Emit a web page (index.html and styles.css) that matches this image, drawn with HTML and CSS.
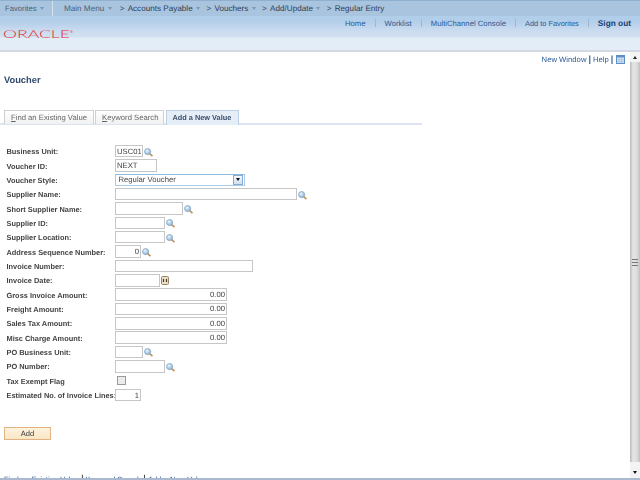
FILE: index.html
```html
<!DOCTYPE html>
<html lang="en">
<head>
<meta charset="utf-8">
<title>Voucher</title>
<link rel="stylesheet" href="styles.css">
</head>
<body>
<svg class="defs" width="0" height="0" aria-hidden="true">
  <defs>
    <radialGradient id="lens" cx="40%" cy="35%" r="70%">
      <stop offset="0" stop-color="#eef6fc"/>
      <stop offset="1" stop-color="#7fabd3"/>
    </radialGradient>
    <symbol id="mag" viewBox="0 0 10 10">
      <line x1="6" y1="6" x2="9.4" y2="9" stroke="#c0905a" stroke-width="1.8"/>
      <circle cx="4" cy="4" r="3.4" fill="url(#lens)" stroke="#85a8c6" stroke-width="0.9"/>
    </symbol>
  </defs>
</svg>
<header class="top">
  <nav class="crumbs">
    <span class="fav">Favorites<i class="caret"></i></span>
    <span class="menu">
      <span class="c1">Main Menu<i class="caret"></i></span>
      <span class="gt">&gt;</span><span class="c2">Accounts Payable<i class="caret"></i></span>
      <span class="gt">&gt;</span><span class="c2">Vouchers<i class="caret"></i></span>
      <span class="gt">&gt;</span><span class="c2">Add/Update<i class="caret"></i></span>
      <span class="gt">&gt;</span><span>Regular Entry</span>
    </span>
  </nav>
  <div class="links">
    <a>Home</a><b class="sep"></b><a>Worklist</a><b class="sep"></b><a>MultiChannel Console</a><b class="sep"></b><a class="fav-link">Add to Favorites</a><b class="sep"></b><a class="out">Sign out</a>
  </div>
  <div class="logo">
    <svg width="74" height="12" viewBox="0 0 74 12"><text x="0" y="8.6" textLength="67" lengthAdjust="spacingAndGlyphs" class="oracle">ORACLE</text><text x="67" y="3.5" class="reg">®</text></svg>
  </div>
</header>
<div class="main">
  <div class="content">
    <div class="tools">
      <a>New Window</a><span class="bar">|</span><a>Help</a><span class="bar">|</span>
      <svg class="grid-ico" width="9" height="9" viewBox="0 0 9 9"><rect x="0.5" y="0.5" width="8" height="8" fill="#dbe7f4" stroke="#5d8fc4"/><rect x="0" y="0" width="9" height="2.5" fill="#5d8fc4"/><path d="M1 4.7h7M1 6.7h7M3.2 3v5M5.8 3v5" stroke="#9dbbdb" stroke-width="0.7"/></svg>
    </div>
    <h1 class="title">Voucher</h1>
    <div class="tabs">
      <div class="tab"><u>F</u>ind an Existing Value</div>
      <div class="tab"><u>K</u>eyword Search</div>
      <div class="tab active">Add a New Value</div>
    </div>
    <form class="form">
      <label>Business Unit:</label><div class="f"><input class="w28" value="USC01"><svg class="mag"><use href="#mag"/></svg></div>
      <label>Voucher ID:</label><div class="f"><input class="w42" value="NEXT"></div>
      <label>Voucher Style:</label><div class="f"><div class="select"><span>Regular Voucher</span><i class="drop"><i class="tri"></i></i></div></div>
      <label>Supplier Name:</label><div class="f"><input class="w182"><svg class="mag"><use href="#mag"/></svg></div>
      <label>Short Supplier Name:</label><div class="f"><input class="w68"><svg class="mag"><use href="#mag"/></svg></div>
      <label>Supplier ID:</label><div class="f"><input class="w50"><svg class="mag"><use href="#mag"/></svg></div>
      <label>Supplier Location:</label><div class="f"><input class="w50"><svg class="mag"><use href="#mag"/></svg></div>
      <label>Address Sequence Number:</label><div class="f"><input class="w26 num" value="0"><svg class="mag"><use href="#mag"/></svg></div>
      <label>Invoice Number:</label><div class="f"><input class="w138"></div>
      <label>Invoice Date:</label><div class="f"><input class="w45"><svg class="cal" width="8" height="9" viewBox="0 0 8 9"><rect x="0.5" y="0.5" width="7" height="8" rx="1" fill="#eadcc0" stroke="#97866a"/><path d="M2.5 3v3M5.5 3v3" stroke="#3d3424" stroke-width="1.1"/></svg></div>
      <label>Gross Invoice Amount:</label><div class="f"><input class="w112 num" value="0.00"></div>
      <label>Freight Amount:</label><div class="f"><input class="w112 num" value="0.00"></div>
      <label>Sales Tax Amount:</label><div class="f"><input class="w112 num" value="0.00"></div>
      <label>Misc Charge Amount:</label><div class="f"><input class="w112 num" value="0.00"></div>
      <label>PO Business Unit:</label><div class="f"><input class="w28"><svg class="mag"><use href="#mag"/></svg></div>
      <label>PO Number:</label><div class="f"><input class="w50"><svg class="mag"><use href="#mag"/></svg></div>
      <label>Tax Exempt Flag</label><div class="f"><i class="check"></i></div>
      <label>Estimated No. of Invoice Lines:</label><div class="f"><input class="w26 num" value="1"></div>
    </form>
    <div class="action"><button class="add" type="button">Add</button></div>
    <div class="foot"><a>Find an Existing Value</a><span class="fbar">|</span><a>Keyword Search</a><span class="fbar">|</span><a>Add a New Value</a></div>
  </div>
  <div class="scroll">
    <div class="sbtn up"><i class="tri-up"></i></div>
    <div class="thumb"><i class="grip"></i></div>
    <div class="sbtn down"><i class="tri"></i></div>
  </div>
</div>
<div class="strip"></div>
</body>
</html>
```
FILE: styles.css
```css
* { box-sizing: border-box; text-rendering: geometricPrecision; }
html, body { margin: 0; height: 480px; overflow: hidden; }
body {
  display: flex;
  flex-direction: column;
  background: #fff;
  font-family: "Liberation Sans", Arial, sans-serif;
  font-size: 7.7px;
  color: #333;
  filter: blur(0.3px);
}
.defs { position: absolute; }
.top {
  height: 52px;
  flex: none;
  background: linear-gradient(#a9c8e8 0, #b3cfea 22px, #c9dbef 30px, #d2e1f2 37px, #e2ecf7 38px, #e4edf8 50px);
  border-bottom: 2px solid #d3d8e3;
}
.crumbs {
  height: 16px;
  display: flex;
  align-items: center;
  background: #a9c4de;
  border-top: 1px solid #8fb0cf;
  color: #2f3f55;
  font-size: 8.15px;
  white-space: nowrap;
}
.fav {
  width: 53px;
  height: 100%;
  padding: 3px 0 0 5px;
  font-size: 7.7px;
  color: #4d5f78;
  border-right: 1px solid #d4e2f0;
}
.menu { display: flex; align-items: center; padding: 0 0 0 11px; }
.caret {
  display: inline-block;
  width: 0; height: 0;
  margin: 0 0 1px 3.5px;
  border: 2.5px solid transparent;
  border-top: 3px solid #7d97b3;
  border-bottom: 0;
}
.gt { margin: 0 3.2px 0 0; color: #3f5068; }
.c1 { margin-right: 8px; color: #4d5f78; }
.c2 { margin-right: 6.3px; }
.links {
  height: 13px;
  padding-top: 1px;
  display: flex;
  justify-content: flex-end;
  align-items: center;
  padding-right: 9px;
  color: #2c5a94;
  white-space: nowrap;
}
.sep { width: 1px; height: 8px; margin: 0 9px; background: #9db8d3; }
.fav-link { font-size: 7.4px; }
.out { font-weight: bold; color: #1c3f74; font-size: 8.3px; }
.logo { height: 11px; padding: 0 0 0 2.5px; display: flex; }
.oracle {
  font-family: Lato, "Liberation Sans", sans-serif;
  font-weight: 300;
  font-size: 11px;
  fill: #e4282c;
}
.reg { font-family: "Liberation Sans", Arial, sans-serif; font-size: 4px; fill: #e4282c; }
.main { flex: 1; display: flex; min-height: 0; }
.content { flex: 1; min-width: 0; overflow: hidden; }
.tools {
  height: 12px;
  display: flex;
  justify-content: flex-end;
  align-items: center;
  padding-right: 4.7px;
  margin-top: 1px;
  color: #2c5a94;
  white-space: nowrap;
}
.bar { margin: 0 2px; color: #3a5f8f; font-weight: bold; font-size: 9px; }
.grid-ico { margin-left: 1px; }
.title {
  margin: 9px 0 0 4px;
  height: 12px;
  font-size: 9.3px;
  line-height: 12px;
  font-weight: bold;
  color: #2e4a6b;
}
.tabs {
  display: flex;
  gap: 1px;
  margin-top: 24px;
  width: 422px;
  height: 15px;
  padding-left: 4px;
  border-bottom: 2px solid #dde3ef;
}
.tab {
  height: 14px;
  padding: 2px 0 0 6px;
  border: 1px solid #d0d0d0;
  border-bottom: 0;
  background: linear-gradient(#fff, #f1f1f1);
  color: #666;
  white-space: nowrap;
}
.tab:nth-child(1) { width: 90px; }
.tab:nth-child(2) { width: 69px; }
.tab.active {
  width: 73px;
  height: 15px;
  margin-left: 1px;
  padding-left: 5.4px;
  padding-top: 2.4px;
  border-color: #bdd0e6;
  border-width: 1px 1px 0 1px;
  background: #e5edf7;
  color: #3a4f6c;
  font-size: 7.36px;
  font-weight: bold;
}
.form {
  display: grid;
  grid-template-columns: 115px 1fr;
  grid-auto-rows: 14.35px;
  margin-top: 19px;
  align-items: center;
}
label {
  padding: 1px 0 0 6.5px;
  font-size: 7.4px;
  font-weight: bold;
  color: #444;
  white-space: nowrap;
}
.f { display: flex; align-items: center; }
input {
  display: block;
  height: 12.5px;
  padding: 0 1px;
  margin: 0;
  border: 1px solid #c6c6c6;
  border-radius: 0;
  background: #fff;
  font: 7.7px "Liberation Sans", Arial, sans-serif;
  color: #444;
  outline: 0;
}
.num { text-align: right; }
.w26 { width: 26px; }
.w28 { width: 28px; }
.w42 { width: 42px; }
.w45 { width: 45px; }
.w50 { width: 50px; }
.w68 { width: 68px; }
.w112 { width: 112px; }
.w138 { width: 138px; }
.w182 { width: 182px; }
.mag { width: 9px; height: 9px; margin: 2px 0 0 1px; }
.cal { margin-left: 0.7px; }
.select {
  width: 130px;
  height: 12.5px;
  display: flex;
  align-items: center;
  justify-content: space-between;
  padding: 0 1px 0 2.5px;
  border: 1px solid #a9cde8;
  border-top-color: #8fbbdc;
  background: #fff;
  color: #444;
}
.drop {
  width: 10px;
  height: 10.5px;
  display: flex;
  align-items: center;
  justify-content: center;
  background: linear-gradient(#f4f8fc, #cfe0f2);
  border: 1px solid #86abd0;
}
.tri {
  width: 0; height: 0;
  border: 2.5px solid transparent;
  border-top: 3px solid #111;
  border-bottom: 0;
}
.check {
  width: 8.5px;
  height: 8.5px;
  margin-left: 2.3px;
  border: 1px solid #9a9a9a;
  background: #ececec;
}
.action { margin-top: 24.5px; padding-left: 4px; }
.add {
  display: block;
  width: 47px;
  height: 13px;
  padding: 0;
  border: 1px solid #e3b483;
  border-radius: 0;
  background: linear-gradient(#fdf3e0, #fae6c4);
  font: 7.5px "Liberation Sans", Arial, sans-serif;
  color: #333;
}
.foot {
  display: flex;
  align-items: baseline;
  margin-top: 34.5px;
  padding-left: 4px;
  font-size: 7.6px;
  color: #2c5a94;
  white-space: nowrap;
  text-decoration: underline;
}
.fbar { margin: 0 2px; color: #222; font-size: 10px; }
.scroll {
  width: 10px;
  flex: none;
  display: flex;
  flex-direction: column;
  background: #f0f0f0;
}
.sbtn { display: flex; align-items: center; justify-content: center; background: #f3f3f3; }
.up { height: 10px; }
.down { height: 16px; padding-top: 5px; }
.tri-up {
  width: 0; height: 0;
  border: 2.5px solid transparent;
  border-bottom: 3px solid #222;
  border-top: 0;
}
.thumb {
  flex: 1;
  display: flex;
  align-items: center;
  justify-content: center;
  background: linear-gradient(90deg, #b8b8b8, #e6e6e6 30%, #dcdcdc 70%, #c0c0c0);
}
.grip {
  width: 6px;
  height: 7px;
  border-top: 1px solid #777;
  border-bottom: 1px solid #777;
  background: linear-gradient(transparent 40%, #777 40%, #777 60%, transparent 60%);
}
.strip { height: 2px; flex: none; background: #aab8d0; }
```
